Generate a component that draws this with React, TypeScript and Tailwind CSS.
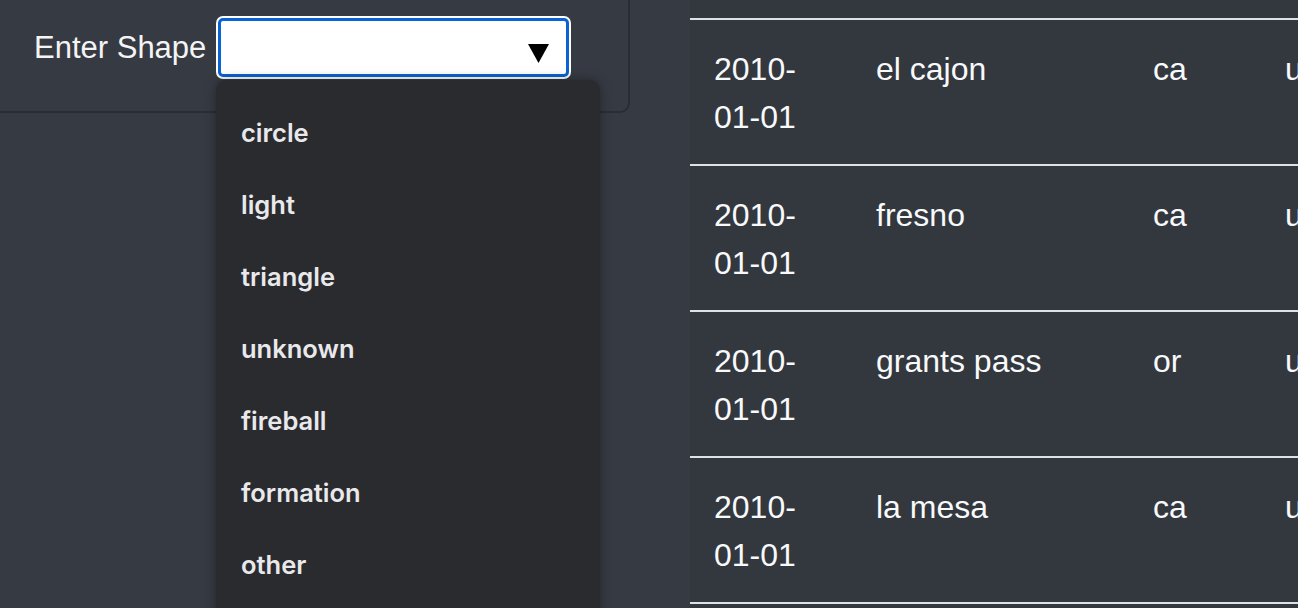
import React from "react";

const rows = [
  ["2010-01-01", "el cajon", "ca", "us"],
  ["2010-01-01", "fresno", "ca", "us"],
  ["2010-01-01", "grants pass", "or", "us"],
  ["2010-01-01", "la mesa", "ca", "us"],
];

const shapes = ["circle", "light", "triangle", "unknown", "fireball", "formation", "other", "disk"];

export default function App() {
  return (
    <div className="relative flex h-[608px] w-[1298px] overflow-hidden bg-[#363a42] text-white" style={{ fontFamily: '"Liberation Sans", Arial, sans-serif' }}>
      {/* Left column */}
      <div className="w-[690px] shrink-0">
        <div className="flex h-[113px] w-[630px] items-start gap-[10px] rounded-br-[10px] border-b-2 border-r-2 border-[#2a2e33] pl-[34px] pt-[16px]">
          <span className="mt-[13px] text-[31px] leading-[38px] text-[#f4f4f5]">Enter Shape</span>
          <div className="h-[63px] w-[355px] rounded-[7px] bg-white p-[2px]">
            <div className="flex h-full w-full items-center justify-end rounded-[5px] border-[3px] border-[#0a63d2] bg-white pr-[17px]">
              <svg width="21" height="19" viewBox="0 0 21 19" className="mt-[12px]">
                <polygon points="0,0 21,0 10.5,19" fill="#000" />
              </svg>
            </div>
          </div>
        </div>
      </div>

      {/* Table */}
      <div className="flex-1 bg-[#33373e]">
        <div className="h-[18px]" />
        <table className="border-collapse text-[32px] leading-[48px] text-[#f8f9fa]" style={{ width: 720 }}>
          <colgroup>
            <col style={{ width: 162 }} />
            <col style={{ width: 277 }} />
            <col style={{ width: 132 }} />
            <col style={{ width: 149 }} />
          </colgroup>
          <tbody>
            {rows.map((r, i) => (
              <tr key={i} className="border-t-2 border-b-2 border-[#dee2e6] align-top">
                <td className="w-[162px] px-6 pb-[23px] pt-[25px]">
                  2010-
                  <br />
                  01-01
                </td>
                <td className="px-6 pb-[23px] pt-[25px]">{r[1]}</td>
                <td className="px-6 pb-[23px] pt-[25px]">{r[2]}</td>
                <td className="px-6 pb-[23px] pt-[25px]">{r[3]}</td>
              </tr>
            ))}
          </tbody>
        </table>
      </div>

      {/* Dropdown menu overlay */}
      <div
        className="absolute left-[216px] top-[80px] h-[560px] w-[384px] rounded-[10px] bg-[#2a2b2f] pt-[17px] shadow-[0_0_12px_rgba(0,0,0,0.35)]"
        style={{ fontFamily: 'Inter, "Noto Sans", sans-serif' }}
      >
        {shapes.map((s) => (
          <div key={s} className="flex h-[72px] items-center pl-[25px] text-[25.5px] font-semibold text-[#e9e9eb]">
            {s}
          </div>
        ))}
      </div>
    </div>
  );
}
